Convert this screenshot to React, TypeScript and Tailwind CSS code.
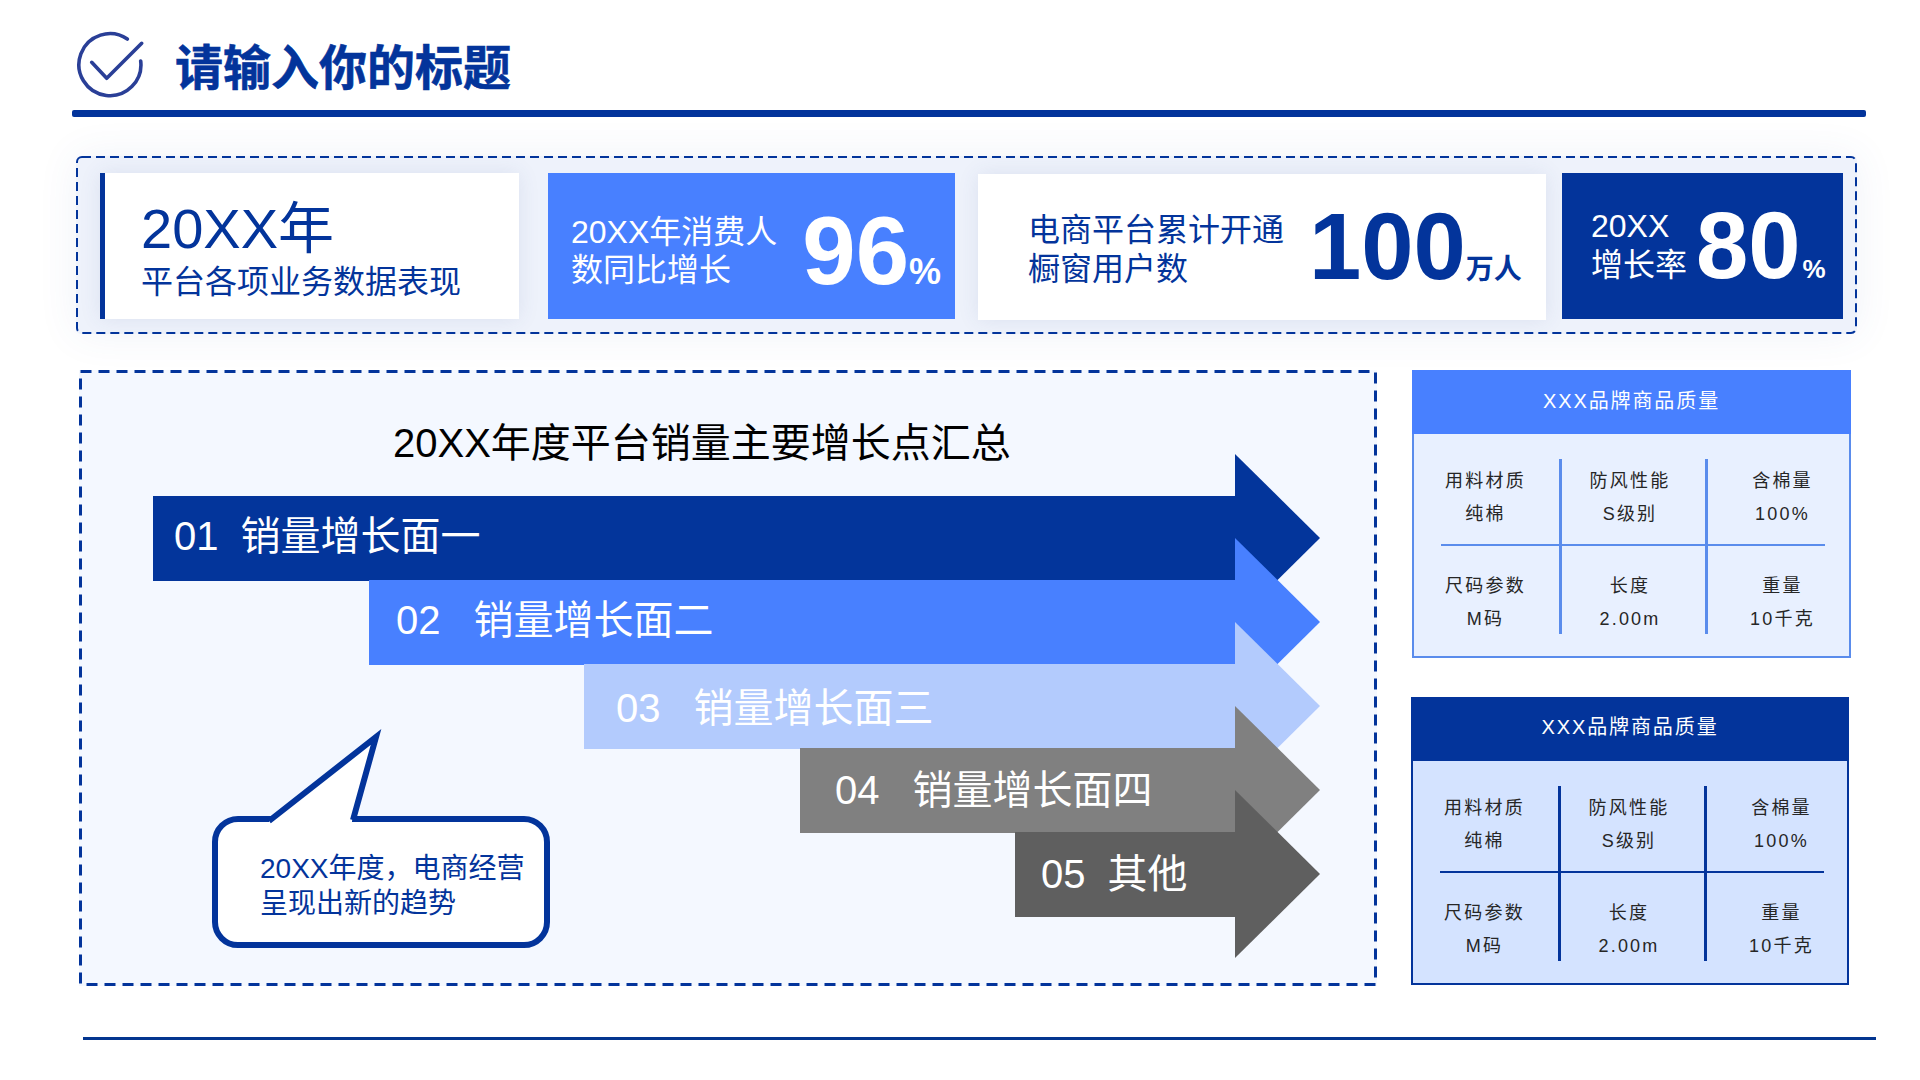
import React from "react";

const arrows = [
  { num: "01", label: "销量增长面一", row: "ml-0", bar: "bg-[#03359b] pl-[21px] pb-[4px]", gap: "ml-[22px]", fill: "#03359b" },
  { num: "02", label: "销量增长面二", row: "ml-[216px]", bar: "bg-[#4880ff] pl-[27px] pb-[4px]", gap: "ml-[33px]", fill: "#4880ff" },
  { num: "03", label: "销量增长面三", row: "ml-[431px]", bar: "bg-[#b3cbfd] pl-[32px] pt-[4px]", gap: "ml-[33px]", fill: "#b3cbfd" },
  { num: "04", label: "销量增长面四", row: "ml-[647px]", bar: "bg-[#808080] pl-[35px]", gap: "ml-[33px]", fill: "#808080" },
  { num: "05", label: "其他", row: "ml-[862px]", bar: "bg-[#5f5f5f] pl-[26px]", gap: "ml-[22px]", fill: "#5f5f5f" },
];

const Arrow = ({ a, first }: { a: (typeof arrows)[number]; first: boolean }) => (
  <div className={`flex h-[168px] items-center ${first ? "" : "-mt-[84px]"} ${a.row}`}>
    <div className={`flex h-[85px] flex-1 items-center whitespace-nowrap text-[40px] leading-none text-white ${a.bar}`}>
      <span>{a.num}</span>
      <span className={a.gap}>{a.label}</span>
    </div>
    <svg width="85" height="168" viewBox="0 0 85 168" className="shrink-0">
      <polygon points="0,0 85,84 0,168" fill={a.fill} />
    </svg>
  </div>
);

const cells = [
  ["用料材质", "纯棉"],
  ["防风性能", "S级别"],
  ["含棉量", "100%"],
  ["尺码参数", "M码"],
  ["长度", "2.00m"],
  ["重量", "10千克"],
];

const cellPad = [
  "pr-[29px] pt-[6px] border-b-2",
  "pr-[7px] pt-[6px] border-x-[3px] border-b-2",
  "pl-[32px] pt-[6px] border-b-2",
  "pr-[29px] pt-[24px]",
  "pr-[7px] pt-[24px] border-x-[3px]",
  "pl-[32px] pt-[24px]",
];

const QualityTable = ({ tone }: { tone: "light" | "dark" }) => {
  const dark = tone === "dark";
  return (
    <div
      className={`flex h-[288px] flex-col border-2 ${
        dark ? "-ml-[1px] w-[438px] border-[#03349b] bg-[#d4e3ff]" : "w-[439px] border-[#5a8cec] bg-[#e8f0ff]"
      }`}
    >
      <div
        className={`-mx-[2px] -mt-[2px] flex h-[64px] items-center justify-center text-[20px] tracking-[1.9px] text-white ${
          dark ? "bg-[#03349b] pb-[4px]" : "bg-[#4880ff] pb-[2px]"
        }`}
      >
        XXX品牌商品质量
      </div>
      <div className="pl-[27px] pt-[25px]">
        <div className="grid w-[384px] grid-cols-[118px_149px_117px] grid-rows-[87px_88px]">
          {cells.map((c, i) => (
            <div
              key={i}
              className={`text-center text-[18px] leading-[33px] tracking-[2.2px] text-[#262626] ${cellPad[i]} ${
                dark ? "border-[#03349b]" : "border-[#5a8cec]"
              }`}
            >
              <div>{c[0]}</div>
              <div>{c[1]}</div>
            </div>
          ))}
        </div>
      </div>
    </div>
  );
};

export default function App() {
  return (
    <div
      lang="zh-CN"
      className="relative h-[1080px] w-[1920px] overflow-hidden bg-white [font-family:'Liberation_Sans','Noto_Sans_CJK_SC',sans-serif]"
    >
      {/* header */}
      <div className="ml-[72px] flex h-[110px] w-[1794px] items-start">
        <svg width="70" height="70" viewBox="0 0 70 70" className="ml-[4px] mt-[30px] shrink-0" fill="none" stroke="#2a3f97" strokeWidth="3.6" strokeLinecap="round" strokeLinejoin="round">
          <path d="M51.3 9 A31 31 0 1 0 64.7 31" />
          <path d="M15.7 32.3 L30.7 48.3 L65.7 13.3" />
        </svg>
        <div className="ml-[29px] mt-[45px] whitespace-nowrap text-[48px] font-bold leading-[48px] text-[#03349b] [-webkit-text-stroke:0.6px_#03349b]">请输入你的标题</div>
      </div>
      <div className="ml-[72px] h-[7px] w-[1794px] rounded-[2px] bg-[#03349b]" />

      {/* summary strip */}
      <div className="relative ml-[76px] mt-[39px] flex h-[178px] w-[1781px] rounded-[5px] bg-[#eef2fb] pl-[24px] pt-[17px] shadow-[0_0_40px_rgba(60,90,170,0.08)]">
        <svg width="1781" height="178" className="absolute left-0 top-0" fill="none">
          <rect x="1" y="1" width="1779" height="176" rx="5" stroke="#03349b" strokeWidth="2" strokeDasharray="9 5" />
        </svg>
        <div className="flex h-[146px] w-[419px] flex-col border-l-[5px] border-[#03349b] bg-white pl-[36px] pt-[28px] shadow-[0_0_20px_rgba(60,80,140,0.10)]">
          <div className="whitespace-nowrap text-[56px] leading-[56px] text-[#03349b]">20XX年</div>
          <div className="mt-[5px] whitespace-nowrap text-[32px] leading-[40px] text-[#03349b]">平台各项业务数据表现</div>
        </div>
        <div className="ml-[29px] flex h-[146px] w-[407px] items-center bg-[#4880ff] pl-[23px] pt-[10px] text-white">
          <div className="text-[32px] leading-[38px]">
            <div className="whitespace-nowrap">20XX年消费人</div>
            <div className="whitespace-nowrap">数同比增长</div>
          </div>
          <div className="ml-[25px] flex items-baseline whitespace-nowrap font-bold">
            <span className="text-[96px] leading-none">96</span>
            <span className="text-[36px] leading-none">%</span>
          </div>
        </div>
        <div className="ml-[23px] mt-[1px] flex h-[146px] w-[568px] items-center bg-white pl-[50px] pt-[6px] text-[#03349b] shadow-[0_0_20px_rgba(60,80,140,0.10)]">
          <div className="text-[32px] leading-[39px]">
            <div className="whitespace-nowrap">电商平台累计开通</div>
            <div className="whitespace-nowrap">橱窗用户数</div>
          </div>
          <div className="-mt-[6px] ml-[25px] flex items-baseline whitespace-nowrap font-bold">
            <span className="text-[94px] leading-none">100</span>
            <span className="text-[28px] leading-none">万人</span>
          </div>
        </div>
        <div className="ml-[16px] flex h-[146px] w-[281px] items-center bg-[#03349b] pl-[29px] text-white">
          <div className="text-[32px] leading-[39px]">
            <div className="whitespace-nowrap">20XX</div>
            <div className="whitespace-nowrap">增长率</div>
          </div>
          <div className="ml-[9px] flex items-baseline whitespace-nowrap font-bold">
            <span className="text-[94px] leading-none">80</span>
            <span className="ml-[2px] text-[26px] leading-none">%</span>
          </div>
        </div>
      </div>

      {/* main row */}
      <div className="mt-[36px] flex items-start pl-[79px]">
        <div className="relative h-[616px] w-[1298px] bg-[#f4f8ff] pl-[74px] pr-[57px]">
          <svg width="1298" height="616" className="absolute left-0 top-0" fill="none">
            <rect x="1.5" y="1.5" width="1295" height="613" stroke="#03349b" strokeWidth="3" strokeDasharray="11 7" />
          </svg>
          <div className="relative ml-[240px] whitespace-nowrap pt-[49px] text-[40px] leading-[48px] text-black">20XX年度平台销量主要增长点汇总</div>
          <div className="relative -mt-[13px]">
            {arrows.map((a, i) => (
              <Arrow key={a.num} a={a} first={i === 0} />
            ))}
          </div>
          {/* speech bubble */}
          <div className="absolute left-[133px] top-[446px] h-[132px] w-[338px] rounded-[26px] border-[6px] border-[#03349b] bg-white pl-[42px] pt-[29px] text-[28px] leading-[35px] text-[#03349b]">
            <svg width="130" height="106" viewBox="0 0 130 106" className="absolute -top-[97px] left-[42px]">
              <polygon points="9,106 9,96 114,12 92,96 92,106" fill="white" />
              <polyline points="9,96 116,12 93,95" fill="none" stroke="#03349b" strokeWidth="6" strokeLinejoin="miter" strokeMiterlimit="10" />
            </svg>
            <div className="whitespace-nowrap">20XX年度，电商经营</div>
            <div className="whitespace-nowrap">呈现出新的趋势</div>
          </div>
        </div>
        <div className="ml-[35px] flex flex-col gap-[39px]">
          <QualityTable tone="light" />
          <QualityTable tone="dark" />
        </div>
      </div>

      <div className="ml-[83px] mt-[51px] h-[3px] w-[1793px] bg-[#03358f]" />
    </div>
  );
}
